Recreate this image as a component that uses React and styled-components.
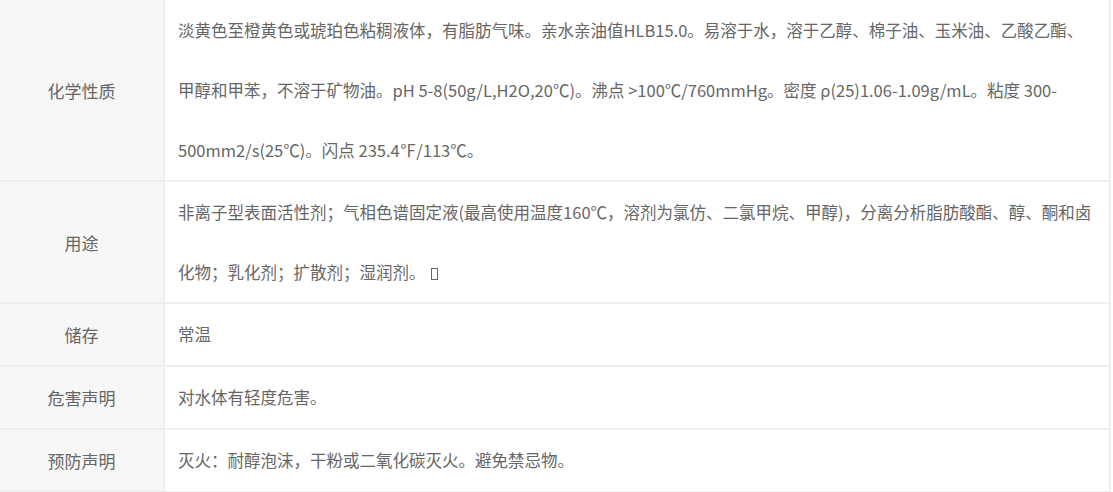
import styled, { createGlobalStyle } from "styled-components";

const GlobalStyle = createGlobalStyle`
  html, body {
    margin: 0;
    padding: 0;
    background: #fff;
  }
  body {
    font-family: "Noto Sans CJK SC", "Noto Sans", sans-serif;
    color: #666;
  }
`;

const Table = styled.div`
  width: 1111px;
  display: grid;
  grid-template-columns: 165px 946px;
`;

const Row = styled.div`
  display: contents;
`;

const Label = styled.div`
  background: #f7f7f7;
  border-right: 2px solid #eee;
  border-bottom: 2px solid #eee;
  display: flex;
  align-items: center;
  justify-content: center;
  font-size: 17px;
  color: #666;
  min-height: ${(p) => p.$min || 60}px;
`;

const Value = styled.div`
  background: #fff;
  border-right: 2px solid #eee;
  border-bottom: 2px solid #eee;
  padding: 0 3px 0 13px;
  font-size: 16.5px;
  line-height: 60px;
  color: #666;
  min-height: ${(p) => p.$min || 60}px;
`;

const Tofu = styled.span`
  display: inline-block;
  width: 7px;
  height: 12px;
  border: 1px solid #666;
  margin-left: 5px;
  vertical-align: -1px;
  box-sizing: border-box;
`;

const rows = [
  {
    label: "化学性质",
    parts: [
      "淡黄色至橙黄色或琥珀色粘稠液体，有脂肪气味。亲水亲油值HLB15.0。易溶于水，溶于乙醇、棉子油、玉米油、乙酸乙酯、",
      "甲醇和甲苯，不溶于矿物油。pH 5-8(50g/L,H2O,20℃)。沸点 >100℃/760mmHg。密度 ρ(25)1.06-1.09g/mL。粘度 300-500mm2/s(25℃)。闪点 235.4℉/113℃。",
    ],
  },
  {
    label: "用途",
    parts: [
      "非离子型表面活性剂；气相色谱固定液(最高使用温度160℃，溶剂为氯仿、二氯甲烷、甲醇)，分离分析脂肪酸酯、醇、酮和卤化物；乳化剂；扩散剂；湿润剂。",
    ],
    tofu: true,
  },
  { label: "储存", parts: ["常温"], min: 61 },
  { label: "危害声明", parts: ["对水体有轻度危害。"], min: 61 },
  { label: "预防声明", parts: ["灭火：耐醇泡沫，干粉或二氧化碳灭火。避免禁忌物。"], min: 61 },
];

export default function App() {
  return (
    <>
      <GlobalStyle />
      <Table>
        {rows.map((r) => (
          <Row key={r.label}>
            <Label $min={r.min}>{r.label}</Label>
            <Value $min={r.min}>
              {r.parts.map((p, i) => (
                <span key={i}>
                  {i > 0 && <br />}
                  {p}
                </span>
              ))}
              {r.tofu && <Tofu />}
            </Value>
          </Row>
        ))}
      </Table>
    </>
  );
}
